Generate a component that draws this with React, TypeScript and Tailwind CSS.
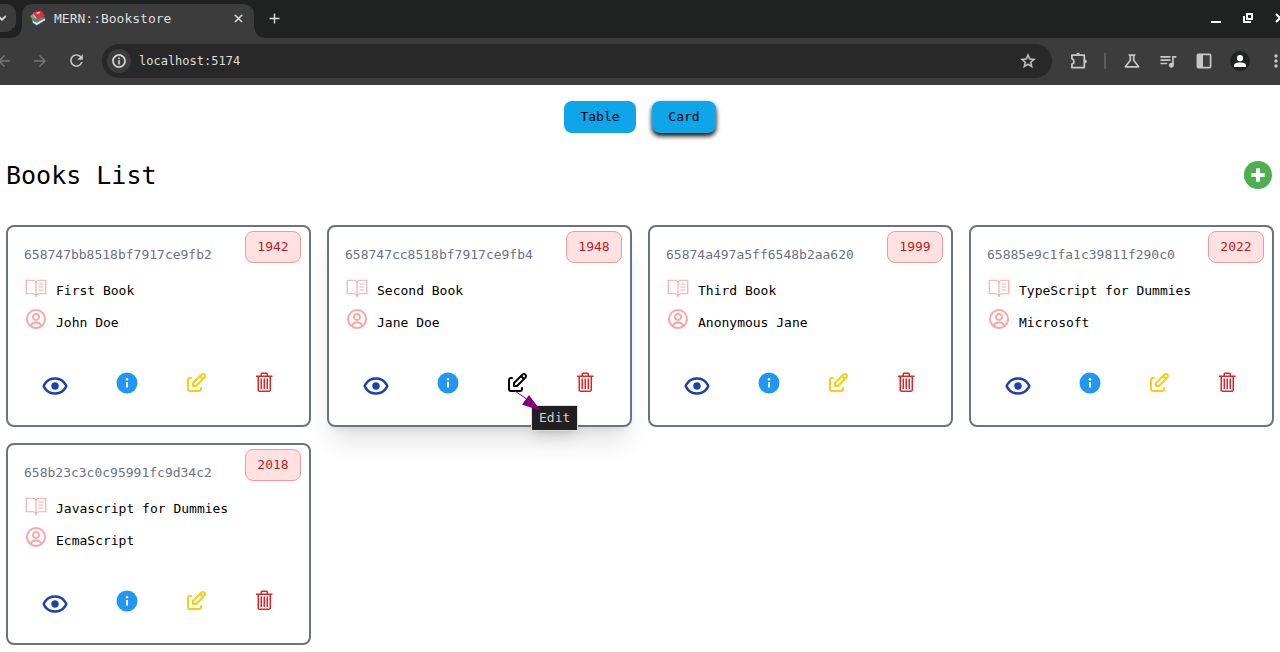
import type { ReactNode } from "react";
import { BiShow, BiUserCircle } from "react-icons/bi";
import { FcInfo, FcPlus } from "react-icons/fc";
import { PiBookOpenTextLight } from "react-icons/pi";
import { TbEdit } from "react-icons/tb";
import { VscTrash } from "react-icons/vsc";
import {
  MdAdd,
  MdArrowBack,
  MdArrowForward,
  MdClose,
  MdInfoOutline,
  MdKeyboardArrowDown,
  MdMoreVert,
  MdOutlineScience,
  MdQueueMusic,
  MdRefresh,
  MdStarBorder,
} from "react-icons/md";

type Book = { id: string; title: string; author: string; year: number };

const books: Book[] = [
  { id: "658747bb8518bf7917ce9fb2", title: "First Book", author: "John Doe", year: 1942 },
  { id: "658747cc8518bf7917ce9fb4", title: "Second Book", author: "Jane Doe", year: 1948 },
  { id: "65874a497a5ff6548b2aa620", title: "Third Book", author: "Anonymous Jane", year: 1999 },
  { id: "65885e9c1fa1c39811f290c0", title: "TypeScript for Dummies", author: "Microsoft", year: 2022 },
  { id: "658b23c3c0c95991fc9d34c2", title: "Javascript for Dummies", author: "EcmaScript", year: 2018 },
];

const activeId = "658747cc8518bf7917ce9fb4";

function BooksLogo() {
  return (
    <svg width="16" height="16" viewBox="0 0 16 16" className="shrink-0" aria-hidden="true">
      <path d="M.2 6.2 4 3 8 12 5.4 13.4Z" fill="#77b255" />
      <path d="M2 9 11 5.5 15.5 10 6.5 15.8 2.4 12.8Z" fill="#3b88c3" />
      <path d="M3 10.4 6.6 12.8 15 8.2 15.3 10 6.8 15 2.6 12.3Z" fill="#e1e8ed" />
      <path d="M1.6 8.4 6.6 10.8 14.4 7 14.6 8.4 6.6 12.4 2 10Z" fill="#5c913b" />
      <path d="M3 2.5 11 .3 15 6 6.8 9.6 3.4 6.4Z" fill="#dd2e44" />
      <path d="M3 2.5 3.4 6.4 6.8 9.6 6.4 7.6 4 4.6Z" fill="#f4abba" />
      <path d="M6.2 2.8 9.2 1.8 10.2 3 7.2 4Z" fill="#f9d5dc" />
    </svg>
  );
}

function PuzzleIcon() {
  return (
    <svg width="20" height="20" viewBox="0 0 20 20" fill="none" stroke="#c7c7c7" strokeWidth="1.8" strokeLinejoin="round" aria-hidden="true">
      <path d="M3.9 4.2H16.3V16.6H3.9V13.2Q6 12.4 6 10.4T3.9 7.6Z" />
      <path d="M8.2 3.6a1.9 1.9 0 0 1 3.8 0ZM17 8.6a1.8 1.8 0 0 1 0 3.6Z" fill="#c7c7c7" stroke="none" />
    </svg>
  );
}

function SidePanelIcon() {
  return (
    <svg width="16" height="16" viewBox="0 0 16 16" aria-hidden="true">
      <rect x="1.4" y="1.4" width="13.2" height="13.2" rx="1" fill="none" stroke="#c7c7c7" strokeWidth="1.7" />
      <path d="M1.5 1.5H7V14.5H1.5Z" fill="#c7c7c7" />
    </svg>
  );
}

function ProfileIcon() {
  return (
    <svg width="20" height="20" viewBox="0 0 20 20" aria-hidden="true">
      <circle cx="10" cy="10" r="10" fill="#202221" />
      <circle cx="10" cy="7.2" r="3.1" fill="#fff" />
      <path d="M4 16V14.2C4 12.2 7 11.4 10 11.4S16 12.2 16 14.2V16Z" fill="#fff" />
    </svg>
  );
}

function ToolButton({ label, dim, children }: { label: string; dim?: boolean; children: ReactNode }) {
  return (
    <button
      type="button"
      aria-label={label}
      className={`flex h-9 w-9 shrink-0 items-center justify-center ${dim ? "text-[#757575]" : "text-[#c7c7c7]"}`}
    >
      {children}
    </button>
  );
}

function BrowserBar() {
  return (
    <header className="overflow-hidden bg-[#202221] text-[#dedede] [&_path[fill=none]]:stroke-none">
      <div className="flex h-[38px] items-start pt-1">
        <button type="button" aria-label="Search tabs" className="-ml-5 flex h-7 w-9 shrink-0 items-center justify-end rounded-[10px] bg-[#3c3c3c] pr-1.5">
          <MdKeyboardArrowDown size={16} stroke="currentColor" strokeWidth={1} />
        </button>
        <div className="relative ml-1.5 flex h-[34px] w-[232px] shrink-0 items-start rounded-t-[10px] bg-[#3c3c3c] px-2 pt-1.5">
          <span className="absolute bottom-0 -left-2.5 h-2.5 w-2.5 bg-[radial-gradient(circle_at_0_0,#202221_9px,#3c3c3c_10px)]" />
          <span className="absolute -right-2.5 bottom-0 h-2.5 w-2.5 bg-[radial-gradient(circle_at_100%_0,#202221_9px,#3c3c3c_10px)]" />
          <BooksLogo />
          <span className="ml-2 flex-1 text-[13px] leading-[18px]">MERN::Bookstore</span>
          <button type="button" aria-label="Close tab" className="flex h-4 w-4 items-center justify-center">
            <MdClose size={13} stroke="currentColor" strokeWidth={1} />
          </button>
        </div>
        <button type="button" aria-label="New tab" className="ml-2 flex h-7 w-6 items-center justify-center">
          <MdAdd size={17} />
        </button>
        <div className="-mr-4 ml-auto flex h-7 items-center text-white">
          <button type="button" aria-label="Minimize" className="flex h-7 w-8 items-center justify-center">
            <svg width="10" height="10" viewBox="0 0 10 10" aria-hidden="true">
              <path d="M0 8H10V10H0Z" fill="currentColor" />
            </svg>
          </button>
          <button type="button" aria-label="Restore" className="flex h-7 w-8 items-center justify-center">
            <svg width="10" height="10" viewBox="0 0 10 10" fill="none" stroke="currentColor" strokeWidth="2" aria-hidden="true">
              <path d="M4 1H9V6H4Z" />
              <path d="M1 3V9H8" />
            </svg>
          </button>
          <button type="button" aria-label="Close" className="flex h-7 w-8 items-center justify-center">
            <svg width="10" height="10" viewBox="0 0 10 10" stroke="currentColor" strokeWidth="2" aria-hidden="true">
              <path d="M1 1 9 9M9 1 1 9" />
            </svg>
          </button>
        </div>
      </div>
      <div className="flex h-[47px] items-center bg-[#3c3c3c] pb-0.5">
        <div className="-ml-3.5 flex">
          <ToolButton label="Back" dim><MdArrowBack size={18} /></ToolButton>
          <ToolButton label="Forward" dim><MdArrowForward size={18} /></ToolButton>
          <ToolButton label="Reload"><MdRefresh size={19} /></ToolButton>
        </div>
        <div className="mr-2 ml-2 flex h-[34px] flex-1 items-center rounded-full bg-[#282828] px-1">
          <button type="button" aria-label="View site information" className="ml-px flex h-6 w-6 items-center justify-center rounded-full bg-[#3c3c3c]">
            <MdInfoOutline size={16} stroke="currentColor" strokeWidth={0.5} />
          </button>
          <input
            aria-label="Address"
            defaultValue="localhost:5174"
            className="ml-2 flex-1 bg-transparent text-[12px] leading-4 text-[#dedede] outline-none"
          />
          <button type="button" aria-label="Bookmark this page" className="flex h-6 w-10 items-center justify-center text-[#c7c7c7]">
            <MdStarBorder size={18} stroke="currentColor" strokeWidth={0.5} />
          </button>
        </div>
        <div className="-mr-3.5 flex items-center">
          <ToolButton label="Extensions"><PuzzleIcon /></ToolButton>
          <span className="mx-2 h-4 w-0.5 bg-[#5c5c5c]" />
          <ToolButton label="Labs"><MdOutlineScience size={20} /></ToolButton>
          <ToolButton label="Media"><MdQueueMusic size={20} /></ToolButton>
          <ToolButton label="Side panel"><SidePanelIcon /></ToolButton>
          <ToolButton label="Profile"><ProfileIcon /></ToolButton>
          <ToolButton label="Menu"><MdMoreVert size={20} /></ToolButton>
        </div>
      </div>
    </header>
  );
}

function EditTooltip() {
  return (
    <>
      <svg width="36" height="28" viewBox="0 0 36 28" className="pointer-events-none absolute top-5 left-2 z-20" aria-hidden="true">
        <path d="M2 0 18 11" stroke="#800080" />
        <path d="M28 20 9 13.5 16 4Z" fill="#800080" />
      </svg>
      <span role="tooltip" className="absolute top-[34px] left-6 z-10 ml-0.5 border border-[#ddd] bg-[#202020] px-[7px] text-[13px] leading-6 text-[#d0d0d0] shadow-lg">
        Edit
      </span>
    </>
  );
}

function BookCard({ book }: { book: Book }) {
  const active = book.id === activeId;
  return (
    <article className={`relative rounded-lg border-2 border-[#6b7280] p-4 ${active ? "shadow-xl" : ""}`}>
      <span className="absolute top-1 right-2 flex h-8 w-14 items-center justify-center rounded-lg border border-[#f09a9a] bg-[#fee2e2] text-[#b91c1c]">
        {book.year}
      </span>
      <p className="leading-6 text-[#6b7280]">{book.id}</p>
      <div className="mt-2 flex h-8 gap-2">
        <PiBookOpenTextLight size={24} className="shrink-0 text-[#fca5a5]" />
        <h2 className="leading-8">{book.title}</h2>
      </div>
      <div className="flex h-8 gap-2">
        <BiUserCircle size={24} className="shrink-0 text-[#fca5a5]" />
        <h2 className="leading-8">{book.author}</h2>
      </div>
      <div className="mt-8 flex items-start justify-between px-4 pb-2">
        <button type="button" aria-label="Preview">
          <BiShow size={30} className="text-[#1e40af]" />
        </button>
        <a href="#details" aria-label="Details">
          <FcInfo size={24} />
        </a>
        <a href="#edit" aria-label="Edit" className="relative">
          <TbEdit size={24} className={active ? "text-black" : "text-[#facc15]"} />
          {active && <EditTooltip />}
        </a>
        <a href="#delete" aria-label="Delete">
          <VscTrash size={24} className="text-[#dc2626]" />
        </a>
      </div>
    </article>
  );
}

export default function App() {
  return (
    <div className="min-h-screen bg-white font-['DejaVu_Sans_Mono',monospace] text-[13px] text-black">
      <BrowserBar />
      <main className="px-1.5 pt-4 pb-2">
        <div className="flex justify-center gap-4">
          <button type="button" className="h-8 w-18 rounded-lg bg-[#0ea5e9]">Table</button>
          <button type="button" className="h-8 w-16 rounded-lg bg-[#0ea5e9] shadow-[0_3px_5px_#000]">Card</button>
        </div>
        <div className="mt-6 flex h-9 items-center justify-between">
          <h1 className="pt-0.5 text-[25px] leading-9">Books List</h1>
          <a href="#create" aria-label="Add book">
            <FcPlus size={32} />
          </a>
        </div>
        <div className="mt-8 grid gap-4 sm:grid-cols-2 lg:grid-cols-4">
          {books.map((book) => (
            <BookCard key={book.id} book={book} />
          ))}
        </div>
      </main>
    </div>
  );
}
